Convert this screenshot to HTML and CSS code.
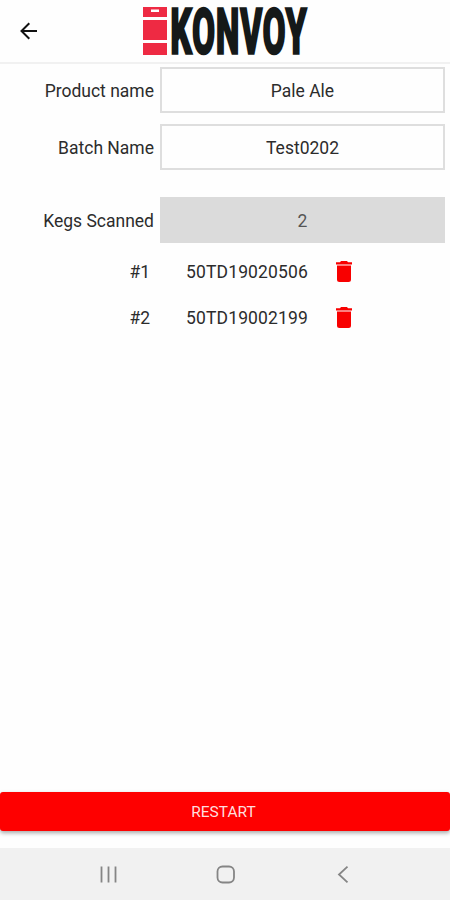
FILE: index.html
```
<!DOCTYPE html>
<html lang="en">
<head>
    <meta charset="UTF-8">
    <meta name="viewport" content="width=device-width, initial-scale=1.0">
    <title>Konvoy</title>
    <link rel="stylesheet" href="styles.css">
</head>
<body>
    <div class="app">
        <header class="header">
            <svg class="back" viewBox="0 0 18 18">
                <path d="M17 9H2M9.3 1.2L1.5 9l7.8 7.8"/>
            </svg>
            <svg class="logo" viewBox="0 0 166 50">
                <g class="keg">
                    <path d="M1 1h24v10H1zM1 14h24v20H1zM1 37h24v12H1z"/>
                    <rect class="handle" x="9" y="3.5" width="8" height="2.5"/>
                </g>
                <g class="logo-text" transform="translate(0 47) scale(0.53 1)">
                    <text x="54" y="0" textLength="256" lengthAdjust="spacing">KONVOY</text>
                </g>
            </svg>
        </header>

        <main class="form">
            <div class="row">
                <label class="label">Product name</label>
                <div class="field">Pale Ale</div>
            </div>
            <div class="row">
                <label class="label">Batch Name</label>
                <div class="field">Test0202</div>
            </div>
            <div class="row row-count">
                <label class="label">Kegs Scanned</label>
                <div class="field field-disabled">2</div>
            </div>

            <div class="keg-row">
                <span class="keg-number">#1</span>
                <span class="keg-code">50TD19020506</span>
                <svg class="trash" viewBox="0 0 16 21">
                    <path d="M0 1.3h4L5 0h6l1 1.3h4v2.2H0zM1 4.5h14v14q0 2.5-2.5 2.5h-9Q1 21 1 18.5z"/>
                </svg>
            </div>
            <div class="keg-row">
                <span class="keg-number">#2</span>
                <span class="keg-code">50TD19002199</span>
                <svg class="trash" viewBox="0 0 16 21">
                    <path d="M0 1.3h4L5 0h6l1 1.3h4v2.2H0zM1 4.5h14v14q0 2.5-2.5 2.5h-9Q1 21 1 18.5z"/>
                </svg>
            </div>
        </main>

        <button class="restart-btn">RESTART</button>

        <nav class="navbar">
            <svg class="nav-icon" viewBox="0 0 20 20">
                <path d="M3.5 2.5v16M10.5 2.5v16M17.5 2.5v16"/>
            </svg>
            <svg class="nav-icon" viewBox="0 0 20 20">
                <rect x="1.5" y="2.5" width="16.5" height="16" rx="5"/>
            </svg>
            <svg class="nav-icon" viewBox="0 0 20 20">
                <path d="M14.5 2.7L6 10.5l8.5 7.8"/>
            </svg>
        </nav>
    </div>
</body>
</html>
```
FILE: styles.css
```
* {
    box-sizing: border-box;
}
body {
    margin: 0;
    background-color: #fefefe;
    color: #2c2c2c;
    font-family: Roboto, "Liberation Sans", sans-serif;
    font-size: 17.5px;
}
.app {
    display: flex;
    flex-direction: column;
    height: 900px;
}
.header {
    display: flex;
    align-items: flex-start;
    height: 64px;
    padding: 6px 0 0 20px;
    border-bottom: 2px solid #f1f1f1;
}
.back {
    width: 18px;
    height: 18px;
    margin-top: 16px;
    fill: none;
    stroke: #111;
    stroke-width: 2;
}
.logo {
    width: 166px;
    height: 50px;
    margin-left: 104px;
    overflow: visible;
}
.keg {
    fill: #ee2a43;
}
.handle {
    fill: #fff;
}
.logo-text {
    font-size: 62px;
    font-weight: 700;
    fill: #151919;
    stroke: #151919;
    stroke-width: 3.5px;
}
.form {
    flex: 1;
    padding: 3px 5px 0 0;
}
.row {
    display: flex;
    align-items: center;
    height: 46px;
    margin-bottom: 11px;
}
.row-count {
    margin-top: 27px;
    margin-bottom: 6px;
}
.label {
    width: 160px;
    padding: 2px 6px 0 0;
    text-align: right;
}
.field {
    flex: 1;
    height: 46px;
    border: 2px solid #dedede;
    line-height: 44px;
    text-align: center;
}
.field-disabled {
    border-color: #dbdbdb;
    background-color: #dbdbdb;
    color: #555;
}
.keg-row {
    display: flex;
    align-items: center;
    height: 46px;
}
.keg-number {
    width: 150px;
    text-align: right;
}
.keg-code {
    width: 150px;
    margin-left: 22px;
    text-align: center;
    letter-spacing: 0.15px;
}
.trash {
    width: 16px;
    height: 21px;
    margin: 0 0 2px 14px;
    fill: #f80000;
}
.restart-btn {
    height: 39px;
    margin-bottom: 17px;
    padding: 1px 3px 0 0;
    border: none;
    border-radius: 3px;
    background-color: #fe0000;
    box-shadow: 0 2px 4px rgba(0, 0, 0, 0.35);
    color: #ffdede;
    font-family: inherit;
    font-size: 15.5px;
    cursor: pointer;
}
.navbar {
    display: flex;
    align-items: center;
    justify-content: space-between;
    height: 52px;
    padding: 0 97px 0 98px;
    background-color: #f1f1f1;
}
.nav-icon {
    width: 20px;
    height: 20px;
    fill: none;
    stroke: #858585;
    stroke-width: 1.8;
}
```
